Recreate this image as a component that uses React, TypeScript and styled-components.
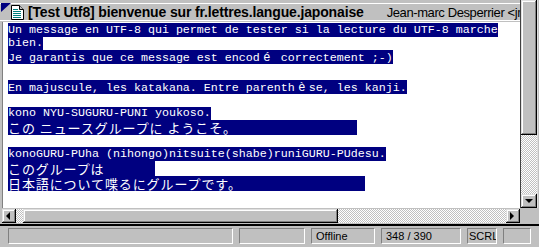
import styled, { createGlobalStyle } from "styled-components";

const Global = createGlobalStyle`
  html, body {
    margin: 0;
    padding: 0;
    background: #c0c0c0;
  }
  body {
    width: 539px;
    height: 247px;
    overflow: hidden;
  }
`;

const raised = `
  background: #c0c0c0;
  box-shadow: inset -1px -1px #000, inset 1px 1px #dfdfdf, inset -2px -2px #808080, inset 2px 2px #fff;
`;

const checker = `
  background: repeating-conic-gradient(#c0c0c0 0 25%, #fff 0 50%) 0 0 / 2px 2px;
`;

const Window = styled.div`
  width: 539px;
  height: 247px;
  display: grid;
  grid-template-columns: 521px 16px 2px;
  grid-template-rows: 208px 16px 2px 21px;
  background: #c0c0c0;
  overflow: hidden;
`;

const Content = styled.div`
  display: flex;
  flex-direction: column;
  border-right: 1px solid #404040;
  min-width: 0;
`;

const Header = styled.div`
  position: relative;
  height: 22px;
  padding-top: 3px;
  box-sizing: border-box;
  background: #c0c0c0;
`;

const HeaderBar = styled.div`
  height: 18px;
  box-sizing: border-box;
  border-top: 1px solid #fff;
  border-bottom: 1px solid #fff;
  display: flex;
  align-items: center;
  padding-left: 11px;
  white-space: nowrap;
  overflow: hidden;
  font-family: "Liberation Sans", Arial, sans-serif;
  color: #000;
`;

const IconSlot = styled.span`
  flex: 0 0 auto;
  display: flex;
  margin-right: 4px;
`;

const Corner = styled.svg`
  position: absolute;
  left: 0;
  top: 3px;
`;

const Subject = styled.span`
  flex: 0 0 auto;
  font-weight: bold;
  font-size: 14px;
  letter-spacing: -0.15px;
  margin-right: 23px;
`;

const Author = styled.span`
  flex: 0 0 auto;
  font-size: 13px;
  letter-spacing: -0.4px;
`;

const Body = styled.div`
  flex: 1;
  background: #fff;
  border-left: 2px solid #c0c0c0;
  box-shadow: inset 1px 0 #808080;
  padding: 1px 0 0 6px;
  overflow: hidden;
`;

const Line = styled.div<{ $h: number }>`
  height: ${(p) => p.$h}px;
  white-space: pre;
`;

const Mark = styled.span<{ $w: number; $h: number; $jp?: boolean }>`
  display: inline-block;
  vertical-align: top;
  width: ${(p) => p.$w}px;
  height: ${(p) => p.$h}px;
  line-height: ${(p) => p.$h}px;
  background: #000080;
  color: #fff;
  font-family: ${(p) =>
    p.$jp
      ? `"Noto Sans CJK JP", "Noto Sans CJK SC", sans-serif`
      : `"Liberation Mono", "Courier New", monospace`};
  font-size: ${(p) => (p.$jp ? "13px" : "11.67px")};
  letter-spacing: ${(p) => (p.$jp ? "0.9px" : "0")};
`;

const Wide = styled.span`
  display: inline-block;
  width: 14px;
  text-align: center;
  font-family: "Liberation Sans", Arial, sans-serif;
  font-size: 12px;
`;

const Space = styled.span<{ $w: number }>`
  display: inline-block;
  width: ${(p) => p.$w}px;
`;

const VScroll = styled.div`
  display: flex;
  flex-direction: column;
`;

const Thumb = styled.div<{ $size?: number }>`
  ${raised}
  flex: 0 0 ${(p) => (p.$size ? `${p.$size}px` : "auto")};
`;

const Track = styled.div<{ $size?: number }>`
  ${checker}
  flex: ${(p) => (p.$size ? `0 0 ${p.$size}px` : "1")};
`;

const ArrowBtn = styled.div<{ $size: number }>`
  ${raised}
  flex: 0 0 ${(p) => p.$size}px;
  display: flex;
  align-items: center;
  justify-content: center;
`;

const HScroll = styled.div`
  display: flex;
  padding: 1px 1px 1px 2px;
`;

const CornerBox = styled.div`
  grid-column: 2 / 4;
  background: #c0c0c0;
`;

const Frame = styled.div`
  background: #c0c0c0;
  box-shadow: inset 1px 0 #dfdfdf;
`;

const Rule = styled.div`
  grid-column: 1 / 4;
  background: #000;
`;

const Status = styled.div`
  grid-column: 1 / 4;
  display: flex;
  gap: 6px;
  padding: 2px 0 0 8px;
  box-sizing: border-box;
`;

const Panel = styled.div<{ $w: number; $pad?: number }>`
  width: ${(p) => p.$w}px;
  height: 16px;
  box-sizing: border-box;
  border-top: 1px solid #808080;
  border-left: 1px solid #808080;
  border-right: 1px solid #fff;
  border-bottom: 1px solid #fff;
  padding-left: ${(p) => p.$pad ?? 4}px;
  font-family: "Liberation Sans", Arial, sans-serif;
  font-size: 11px;
  line-height: 14px;
  color: #000;
  white-space: nowrap;
  overflow: hidden;
`;

type Seg = string | { wide: string } | { sp: number };
type Row = { h: number; w?: number; jp?: boolean; parts?: Seg[] };

const rows: Row[] = [
  { h: 14, w: 490, parts: ["Un message en UTF-8 qui permet de tester si la lecture du UTF-8 marche"] },
  { h: 13, w: 35, parts: ["bien."] },
  { h: 14, w: 385, parts: ["Je garantis que ce message est encod", { wide: "é" }, " correctement ;-)"] },
  { h: 16 },
  { h: 14, w: 399, parts: ["En majuscule, les katakana. Entre parenth", { wide: "è" }, "se, les kanji."] },
  { h: 13 },
  { h: 13, w: 203, parts: ["kono NYU-SUGURU-PUNI youkoso."] },
  { h: 15, w: 349, jp: true, parts: ["この", { sp: 4 }, "ニュースグループに", { sp: 4 }, "ようこそ。"] },
  { h: 12 },
  { h: 14, w: 378, parts: ["konoGURU-PUha (nihongo)nitsuite(shabe)runiGURU-PUdesu."] },
  { h: 15, w: 147, jp: true, parts: ["このグループは"] },
  { h: 15, w: 357, jp: true, parts: ["日本語について喋るにグループです。"] },
];

const panels = [
  { w: 225, text: "" },
  { w: 66, text: "" },
  { w: 64, text: "Offline" },
  { w: 80, text: "348 / 390" },
  { w: 30, text: "SCRL", pad: 1 },
  { w: 28, text: "" },
];

function DocIcon() {
  return (
    <svg width="13" height="15" viewBox="0 0 13 15">
      <path d="M0.5 0.5h8l4 4v10h-12z" fill="#fff" stroke="#000" />
      <path d="M8.5 0.5v4h4" fill="#c0c0c0" stroke="#000" />
      {[4, 6, 8, 10, 12].map((y) => (
        <rect key={y} x="2" y={y} width={y === 4 ? 5 : 8} height="1" fill="#008080" />
      ))}
    </svg>
  );
}

function Arrow({ dir }: { dir: "left" | "right" | "down" }) {
  const pts =
    dir === "left" ? "5,0 5,8 1,4" : dir === "right" ? "1,0 1,8 5,4" : "0,2 8,2 4,6";
  return (
    <svg width="8" height="8" viewBox="0 0 8 8">
      <polygon points={pts} fill="#000" />
    </svg>
  );
}

function renderSeg(s: Seg, j: number) {
  if (typeof s === "string") return s;
  if ("wide" in s) return <Wide key={j}>{s.wide}</Wide>;
  return <Space key={j} $w={s.sp} />;
}

export default function App() {
  return (
    <>
      <Global />
      <Window>
        <Content>
          <Header>
            <Corner width="12" height="10" viewBox="0 0 12 10">
              <polygon points="1,0 11,0 1,9" fill="#000080" />
            </Corner>
            <HeaderBar>
              <IconSlot>
                <DocIcon />
              </IconSlot>
              <Subject>[Test Utf8] bienvenue sur fr.lettres.langue.japonaise</Subject>
              <Author>Jean-marc Desperrier &lt;jmdesp@free.fr&gt;</Author>
            </HeaderBar>
          </Header>
          <Body>
            {rows.map((r, i) => (
              <Line key={i} $h={r.h}>
                {r.parts && (
                  <Mark $w={r.w ?? 0} $h={r.h} $jp={r.jp}>
                    {r.parts.map(renderSeg)}
                  </Mark>
                )}
              </Line>
            ))}
          </Body>
        </Content>
        <VScroll>
          <Thumb $size={135} />
          <Track />
          <ArrowBtn $size={14}>
            <Arrow dir="down" />
          </ArrowBtn>
        </VScroll>
        <Frame />
        <HScroll>
          <ArrowBtn $size={14}>
            <Arrow dir="left" />
          </ArrowBtn>
          <Track $size={7} />
          <Thumb $size={315} />
          <Track />
          <ArrowBtn $size={14}>
            <Arrow dir="right" />
          </ArrowBtn>
        </HScroll>
        <CornerBox />
        <Rule />
        <Status>
          {panels.map((p, i) => (
            <Panel key={i} $w={p.w} $pad={p.pad}>
              {p.text}
            </Panel>
          ))}
        </Status>
      </Window>
    </>
  );
}
